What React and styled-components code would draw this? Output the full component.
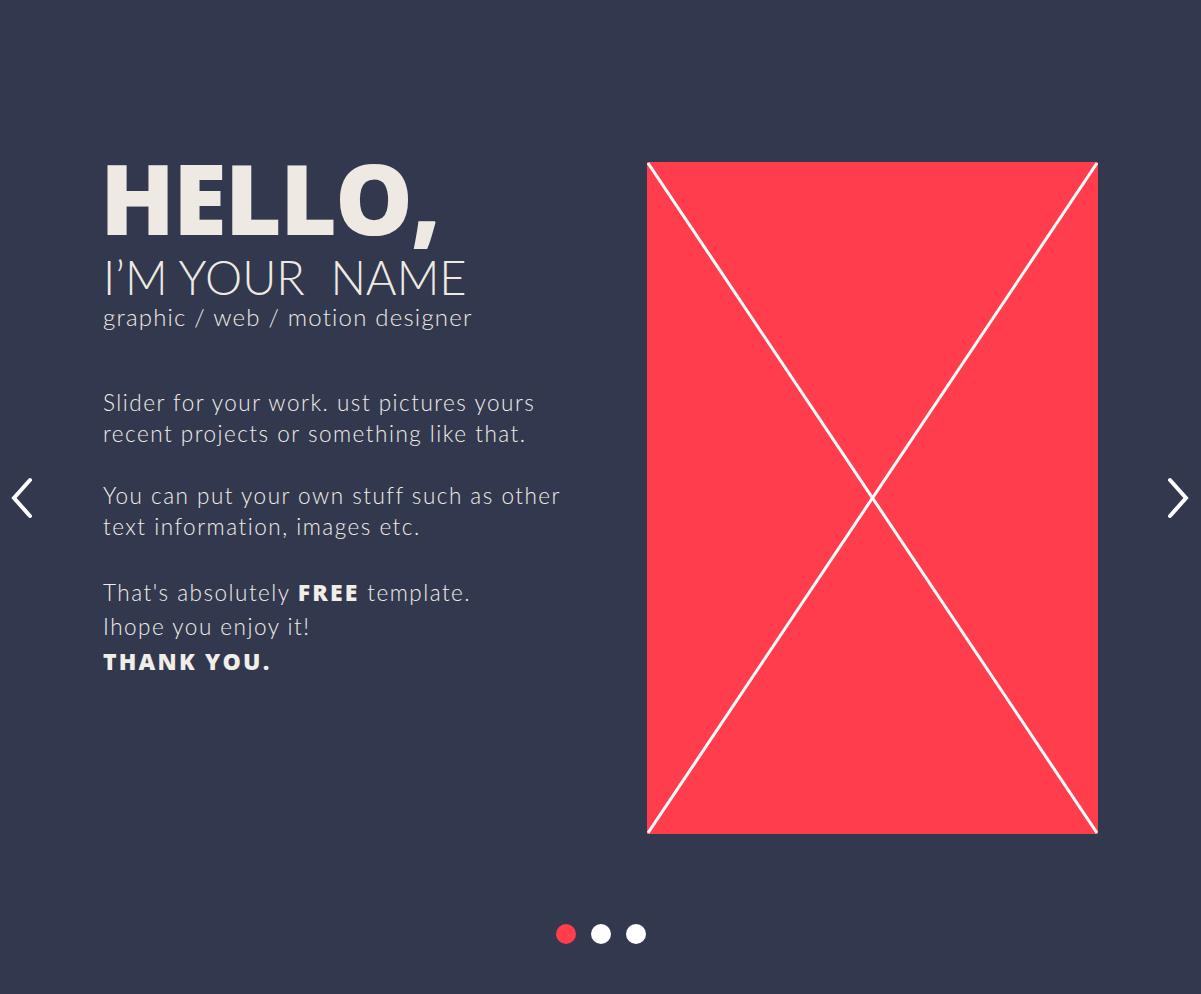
import React, { useState } from 'react';
import styled, { createGlobalStyle } from 'styled-components';

const GlobalStyle = createGlobalStyle`
  html, body {
    margin: 0;
    padding: 0;
    background: #32394f;
  }
  * { box-sizing: border-box; }
`;

const Page = styled.div`
  width: 100%;
  height: 994px;
  background: #32394f;
  color: #eeeae3;
  font-family: Lato, "Open Sans", sans-serif;
  padding-top: 162px;
  overflow: hidden;
`;

const Stage = styled.div`
  display: flex;
  align-items: center;
  height: 672px;
`;

const Arrow = styled.button`
  flex: none;
  width: 24px;
  height: 42px;
  padding: 0;
  margin: ${p => (p.$side === 'left' ? '0 0 0 10px' : '0 11px 0 0')};
  border: none;
  background: none;
  cursor: pointer;
  display: flex;
  align-items: center;
  justify-content: center;
`;

const Slide = styled.div`
  flex: 1;
  display: flex;
  align-items: stretch;
  height: 100%;
`;

const Intro = styled.div`
  width: 613px;
  padding-left: 69px;
`;

const Hello = styled.h1`
  margin: 0;
  font-family: "Open Sans", Lato, sans-serif;
  font-weight: 800;
  font-size: 98px;
  line-height: 70px;
  letter-spacing: -2px;
  margin-left: -3px;
`;

const Name = styled.h2`
  margin: 0;
  font-weight: 300;
  font-size: 47px;
  line-height: 46px;
  letter-spacing: 0px;
  margin-top: 22px;
`;

const Role = styled.div`
  font-weight: 300;
  font-size: 24px;
  line-height: 24px;
  letter-spacing: 1.2px;
  margin-top: 5px;
`;

const Body = styled.div`
  margin-top: 58px;
  font-weight: 300;
  font-size: 22.5px;
  letter-spacing: 1.5px;
  color: #f1eee8;
`;

const Para = styled.p`
  margin: 0 0 ${p => p.$gap ?? 31}px;
  line-height: ${p => p.$lh || 31}px;
`;

const Strong = styled.strong`
  font-family: "Open Sans", Lato, sans-serif;
  font-weight: 800;
  font-size: 23px;
  letter-spacing: 2.2px;
`;

const Picture = styled.div`
  width: 451px;
  height: 100%;
  background: #ff3d4d;

  svg { display: block; width: 100%; height: 100%; }
`;

const Spacer = styled.div`
  flex: 1;
`;

const Dots = styled.div`
  display: flex;
  justify-content: center;
  gap: 15px;
  margin-top: 90px;
`;

const Dot = styled.button`
  width: 20px;
  height: 20px;
  padding: 0;
  border: none;
  border-radius: 50%;
  background: ${p => (p.$active ? '#ff3d4d' : '#ffffff')};
  cursor: pointer;
`;

function Chevron({ dir }) {
  const d = dir === 'left' ? 'M20 3 L4 21 L20 39' : 'M4 3 L20 21 L4 39';
  return (
    <svg width="24" height="42" viewBox="0 0 24 42">
      <path d={d} fill="none" stroke="#fff" strokeWidth="4" strokeLinecap="round" />
    </svg>
  );
}

export default function App() {
  const [active, setActive] = useState(0);
  return (
    <>
      <GlobalStyle />
      <Page>
        <Stage>
          <Arrow $side="left" onClick={() => setActive((active + 2) % 3)}>
            <Chevron dir="left" />
          </Arrow>
          <Slide>
            <Intro>
              <Hello>HELLO,</Hello>
              <Name>I’M YOUR&nbsp; NAME</Name>
              <Role>graphic / web / motion designer</Role>
              <Body>
                <Para>
                  Slider for your work. ust pictures yours<br />
                  recent projects or something like that.
                </Para>
                <Para $gap={33}>
                  You can put your own stuff such as other<br />
                  text information, images etc.
                </Para>
                <Para $gap={0} $lh={34}>
                  That's absolutely <Strong>FREE</Strong> template.<br />
                  Ihope you enjoy it!<br />
                  <Strong>THANK YOU.</Strong>
                </Para>
              </Body>
            </Intro>
            <Picture>
              <svg viewBox="0 0 451 672" preserveAspectRatio="none">
                <line x1="1" y1="1" x2="450" y2="671" stroke="#fff" strokeWidth="3" />
                <line x1="450" y1="1" x2="1" y2="671" stroke="#fff" strokeWidth="3" />
              </svg>
            </Picture>
            <Spacer />
          </Slide>
          <Arrow $side="right" onClick={() => setActive((active + 1) % 3)}>
            <Chevron dir="right" />
          </Arrow>
        </Stage>
        <Dots>
          {[0, 1, 2].map(i => (
            <Dot key={i} $active={i === active} onClick={() => setActive(i)} />
          ))}
        </Dots>
      </Page>
    </>
  );
}
